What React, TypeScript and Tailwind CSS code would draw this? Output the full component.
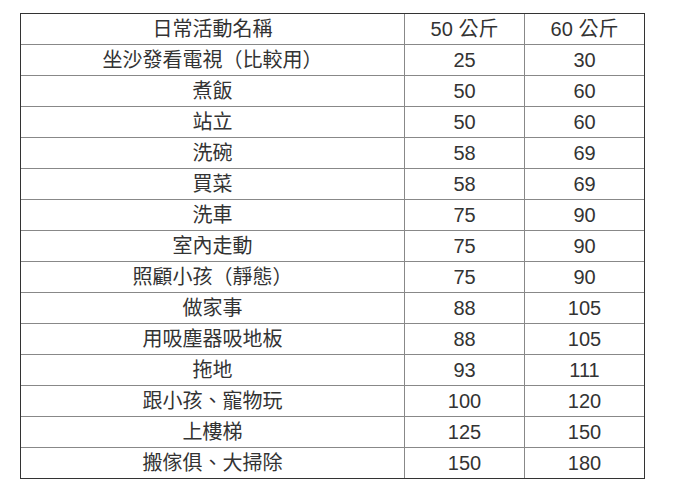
const rows: [string, string, string][] = [
  ["坐沙發看電視（比較用）", "25", "30"],
  ["煮飯", "50", "60"],
  ["站立", "50", "60"],
  ["洗碗", "58", "69"],
  ["買菜", "58", "69"],
  ["洗車", "75", "90"],
  ["室內走動", "75", "90"],
  ["照顧小孩（靜態）", "75", "90"],
  ["做家事", "88", "105"],
  ["用吸塵器吸地板", "88", "105"],
  ["拖地", "93", "111"],
  ["跟小孩、寵物玩", "100", "120"],
  ["上樓梯", "125", "150"],
  ["搬傢俱、大掃除", "150", "180"],
];

const all: [string, string, string][] = [["日常活動名稱", "50 公斤", "60 公斤"], ...rows];

const App = () => {
  return (
    <div
      lang="zh-TW"
      className="w-[693px] h-[483px] bg-white pl-[20px] pt-[13px] font-['Liberation_Sans','Noto_Sans_CJK_TC',sans-serif] text-[20px] text-[#333]"
    >
      <div className="w-[625px] border border-[#333] grid grid-cols-[384px_120px_119px]">
        {all.map((r, i) => {
          const last = i === all.length - 1;
          const rowCls = last ? "h-[30px]" : "h-[31px] border-b";
          return (
            <div key={i} className="contents">
              <div className={`${rowCls} border-r border-[#888] flex items-center justify-center leading-none`}>{r[0]}</div>
              <div className={`${rowCls} border-r border-[#888] flex items-center justify-center leading-none`}>{r[1]}</div>
              <div className={`${rowCls} border-[#888] flex items-center justify-center leading-none`}>{r[2]}</div>
            </div>
          );
        })}
      </div>
    </div>
  );
};

export default App;
